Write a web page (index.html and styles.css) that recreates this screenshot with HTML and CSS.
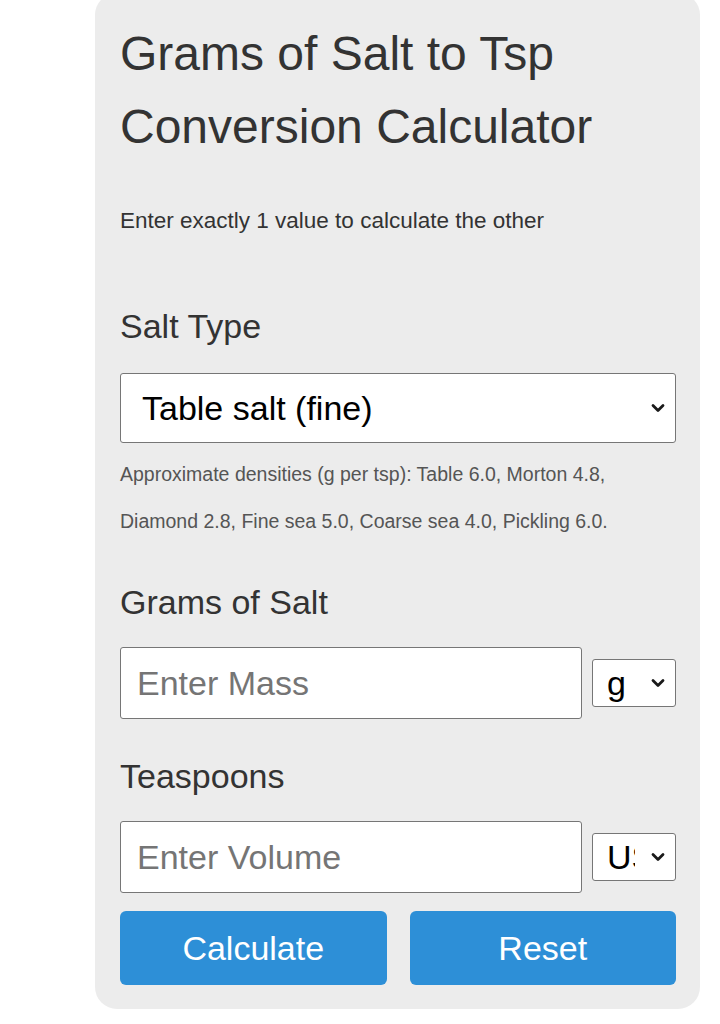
FILE: index.html
```html
<!DOCTYPE html>
<html lang="en">
<head>
    <meta charset="UTF-8">
    <meta name="viewport" content="width=device-width, initial-scale=1.0">
    <title>Grams of Salt to Tsp Conversion Calculator</title>
    <link rel="stylesheet" href="styles.css">
</head>
<body>
    <div class="calculator">
        <h1>Grams of Salt to Tsp Conversion Calculator</h1>
        <p class="hint">Enter exactly 1 value to calculate the other</p>

        <label class="field-label" for="salt-type">Salt Type</label>
        <div class="select-wrap salt-wrap">
            <select id="salt-type" class="salt-select">
                <option value="6.0">Table salt (fine)</option>
                <option value="4.8">Morton kosher</option>
                <option value="2.8">Diamond Crystal kosher</option>
                <option value="5.0">Fine sea salt</option>
                <option value="4.0">Coarse sea salt</option>
                <option value="6.0">Pickling salt</option>
            </select>
            <svg class="chevron" width="14" height="9" viewBox="0 0 14 9"><path d="M2 2 L7 7 L12 2" /></svg>
        </div>
        <p class="note">Approximate densities (g per tsp): Table 6.0, Morton 4.8, Diamond 2.8, Fine sea 5.0, Coarse sea 4.0, Pickling 6.0.</p>

        <label class="field-label" for="mass">Grams of Salt</label>
        <div class="input-row">
            <input type="text" id="mass" placeholder="Enter Mass">
            <div class="select-wrap unit-wrap">
                <select id="mass-unit" class="unit-select">
                    <option>g</option>
                    <option>kg</option>
                    <option>oz</option>
                </select>
                <svg class="chevron" width="14" height="9" viewBox="0 0 14 9"><path d="M2 2 L7 7 L12 2" /></svg>
            </div>
        </div>

        <label class="field-label" for="volume">Teaspoons</label>
        <div class="input-row">
            <input type="text" id="volume" placeholder="Enter Volume">
            <div class="select-wrap unit-wrap">
                <select id="volume-unit" class="unit-select">
                    <option>US tsp</option>
                    <option>UK tsp</option>
                    <option>Metric tsp</option>
                </select>
                <svg class="chevron" width="14" height="9" viewBox="0 0 14 9"><path d="M2 2 L7 7 L12 2" /></svg>
            </div>
        </div>

        <div class="buttons">
            <button type="button" id="calculate">Calculate</button>
            <button type="button" id="reset">Reset</button>
        </div>
    </div>
</body>
</html>
```

FILE: styles.css
```css
body {
    margin: 0;
    padding: 0;
    background-color: #fff;
    font-family: "Liberation Sans", Arial, sans-serif;
    color: #333;
}
.calculator {
    box-sizing: border-box;
    width: 605px;
    margin: -7px 0 0 95px;
    padding: 24px 24px 24px 25px;
    background-color: #ececec;
    border-radius: 22px;
}
h1 {
    margin: 0;
    font-size: 48px;
    font-weight: normal;
    line-height: 73px;
    color: #333;
}
.hint {
    margin: 43px 0 0;
    font-size: 22.5px;
    line-height: 30px;
    color: #333;
}
.field-label {
    display: block;
    font-size: 34px;
    line-height: 40px;
    color: #333;
}
.hint + .field-label {
    margin-top: 70px;
}
.note + .field-label,
.input-row + .field-label {
    margin-top: 37px;
}
select,
input[type="text"] {
    box-sizing: border-box;
    font-family: "Liberation Sans", Arial, sans-serif;
    font-size: 34px;
    color: #000;
    background-color: #fff;
    border: 1px solid #767676;
    border-radius: 3px;
}
select {
    appearance: none;
    -webkit-appearance: none;
    width: 100%;
    outline: none;
}
.select-wrap {
    position: relative;
}
.chevron {
    position: absolute;
    right: 11px;
    top: 50%;
    transform: translateY(-50%);
    pointer-events: none;
}
.chevron path {
    fill: none;
    stroke: #1a1a1a;
    stroke-width: 2.8;
    stroke-linecap: round;
    stroke-linejoin: round;
}
.salt-wrap {
    margin-top: 27px;
}
.salt-select {
    display: block;
    height: 70px;
    padding: 0 40px 0 21px;
}
.note {
    margin: 8px 0 0;
    font-size: 19.5px;
    line-height: 47px;
    color: #555;
}
.input-row {
    display: flex;
    align-items: center;
    gap: 10px;
    margin-top: 25px;
}
.input-row input[type="text"] {
    flex: 1 1 0;
    min-width: 0;
    height: 72px;
    padding: 0 16px;
    outline: none;
}
.input-row input::placeholder {
    color: #757575;
}
.unit-wrap {
    flex: none;
    width: 84px;
}
.unit-select {
    display: block;
    height: 48px;
    padding: 0 40px 0 14px;
}
.buttons {
    display: flex;
    gap: 23px;
    margin-top: 18px;
}
button {
    flex: 1;
    height: 74px;
    font-family: "Liberation Sans", Arial, sans-serif;
    font-size: 34px;
    color: #fff;
    background-color: #2d8fd7;
    border: none;
    border-radius: 6px;
    cursor: pointer;
}
button:hover {
    background-color: #1f7bbf;
}
```
